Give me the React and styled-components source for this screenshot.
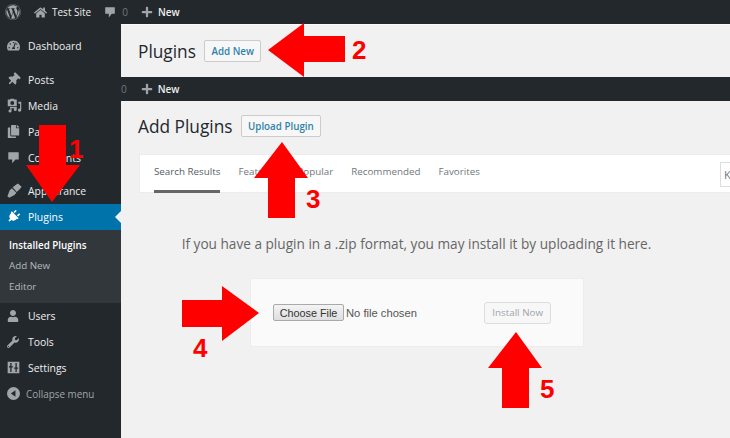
import styled, { createGlobalStyle } from 'styled-components'
import {
  FaWordpress, FaHome, FaPlus, FaThumbtack, FaPlug,
  FaUser, FaWrench, FaTachometerAlt, FaCopy,
} from 'react-icons/fa'

const Global = createGlobalStyle`
  html, body { margin: 0; padding: 0; background: #f1f1f1; }
  * { box-sizing: border-box; }
`

const Page = styled.div`
  position: relative;
  width: 730px;
  height: 438px;
  overflow: hidden;
  background: #f1f1f1;
  font-family: "Open Sans", "Liberation Sans", sans-serif;
  display: flex;
  flex-direction: column;
`

const Bar = styled.div`
  flex: none;
  height: 24px;
  background: #23282d;
  color: #eee;
  font-size: 10px;
  display: flex;
  align-items: center;
  padding-left: ${p => p.$left || 0}px;
  svg { color: #a0a5aa; flex: none; }
`

const BarText = styled.span`
  margin-left: ${p => p.$left || 0}px;
  color: ${p => p.$muted ? '#72777c' : '#eee'};
  font-weight: ${p => p.$bold ? 600 : 400};
`

const BarIcon = styled.span`
  display: flex;
  margin-left: ${p => p.$left || 0}px;
`

const Body = styled.div`
  flex: 1;
  display: flex;
  min-height: 0;
`

const Sidebar = styled.nav`
  flex: none;
  width: 121px;
  background: #23282d;
  padding-top: 9px;
  display: flex;
  flex-direction: column;
`

const Group = styled.div`
  margin-bottom: ${p => p.$gap || 0}px;
`

const Row = styled.div`
  position: relative;
  height: 26px;
  display: flex;
  align-items: center;
  padding: 0 0 1px 7px;
  font-size: ${p => p.$muted ? 9.9 : 10.4}px;
  color: ${p => p.$active ? '#fff' : p.$muted ? '#a0a5aa' : '#eee'};
  background: ${p => p.$active ? '#0073aa' : 'transparent'};
  svg { color: ${p => p.$active ? '#fff' : '#a0a5aa'}; }
`

const Notch = styled.i`
  position: absolute;
  right: 0;
  top: 7px;
  border: 6px solid transparent;
  border-right-color: #f1f1f1;
  border-left-width: 0;
`

const IconSlot = styled.span`
  width: ${p => p.$w || 21}px;
  flex: none;
  display: flex;
  align-items: center;
`

const Tilted = styled.span`
  display: flex;
  transform: rotate(${p => p.$deg}deg);
`

const Submenu = styled.div`
  height: 73px;
  background: #32373c;
  padding-top: 5px;
`

const SubItem = styled.div`
  height: 20.5px;
  display: flex;
  align-items: center;
  padding-left: 9px;
  font-size: 9.8px;
  color: ${p => p.$current ? '#fff' : '#b4b9be'};
  font-weight: ${p => p.$current ? 600 : 400};
`

const Main = styled.main`
  flex: 1;
  min-width: 0;
  display: flex;
  flex-direction: column;
`

const Header = styled.div`
  flex: none;
  height: ${p => p.$h}px;
  display: flex;
  align-items: center;
  gap: 8px;
  padding: 0 0 0 17px;
  border-top: ${p => p.$line ? '1px solid #fafafa' : 'none'};
`

const Title = styled.h1`
  margin: 0;
  font-size: 17.3px;
  font-weight: 400;
  color: #23282d;
`

const SmallButton = styled.a`
  height: 22px;
  display: flex;
  align-items: center;
  padding: 0 6.5px;
  background: #f7f7f7;
  border: 1px solid #ccc;
  border-radius: 2px;
  font-size: 9.8px;
  font-weight: 600;
  color: #2f83ab;
`

const Tabs = styled.div`
  flex: none;
  margin: 3px -20px 0 18px;
  height: 39px;
  background: #fff;
  border: 1px solid #ececec;
  border-right: none;
  display: flex;
  padding-left: 14px;
  gap: 18px;
  position: relative;
`

const Tab = styled.div`
  height: 38px;
  display: flex;
  align-items: center;
  padding-bottom: 2px;
  font-size: 9.8px;
  color: ${p => p.$active ? '#555d66' : '#72777c'};
  border-bottom: 3px solid ${p => p.$active ? '#666' : 'transparent'};
`

const Search = styled.div`
  position: absolute;
  left: 580px;
  top: 7px;
  width: 60px;
  height: 25px;
  padding: 4px 0 0 3px;
  background: #fff;
  border: 1px solid #ddd;
  font-size: 11px;
  color: #72777c;
`

const Hint = styled.p`
  margin: 41px 0 0;
  width: 591px;
  text-align: center;
  font-size: 13.63px;
  line-height: 20px;
  color: #666;
`

const UploadCard = styled.div`
  flex: none;
  width: 334px;
  height: 69px;
  margin: 24px 0 0 129px;
  padding: 0 32px 0 22px;
  background: #fafafa;
  border: 1px solid #ededed;
  display: flex;
  align-items: center;
  justify-content: space-between;
`

const FileInput = styled.input`
  width: 200px;
  font-family: "Liberation Sans", Arial, sans-serif;
  font-size: 11.2px;
  color: #555;

  &::file-selector-button {
    height: 17px;
    width: 71px;
    padding: 0;
    margin-right: 2px;
    font: inherit;
    font-size: 10.8px;
    color: #333;
    background: linear-gradient(#f4f4f4, #dedede);
    border: 1px solid #a9a9a9;
    border-radius: 2px;
  }
`

const InstallButton = styled.span`
  height: 22px;
  display: flex;
  align-items: center;
  padding: 0 7px;
  background: #f7f7f7;
  border: 1px solid #ddd;
  border-radius: 3px;
  font-size: 9.8px;
  color: #a0a5aa;
`

const Overlay = styled.svg`
  position: absolute;
  left: 0;
  top: 0;
  pointer-events: none;
`

const Step = styled.span`
  position: absolute;
  left: ${p => p.$x}px;
  top: ${p => p.$y}px;
  font-family: "Liberation Sans", Arial, sans-serif;
  font-size: 26px;
  line-height: 26px;
  font-weight: 700;
  color: #f00;
`

const arrows = [
  '39,125 66,125 66,165 80,165 52,202 26,165 39,165',
  '268,50 304,23 304,36 345,36 345,62 304,62 304,77',
  '282,142 308,178 295,178 295,218 268,218 268,178 254,178',
  '259,313 222,286 222,300 182,300 182,327 222,327 222,341',
  '516,332 542,368 529,368 529,408 502,408 502,368 488,368',
]

const steps = [
  { n: 1, x: 69, y: 136 },
  { n: 2, x: 352, y: 37 },
  { n: 3, x: 306, y: 186 },
  { n: 4, x: 193, y: 335 },
  { n: 5, x: 540, y: 376 },
]

const Bubble = ({ size = 12 }) => (
  <svg width={size} height={size} viewBox="0 0 20 20" fill="currentColor">
    <path d="M2 2h16v11h-5l-5 6v-6H2z" />
  </svg>
)

const MediaIcon = () => (
  <svg width="15" height="15" viewBox="0 0 20 20" fill="currentColor">
    <path d="M1 2h3l1-1h4l1 1h3v9H1zM7 4a2.6 2.6 0 1 0 0 5.200a2.600 2.600 0 0 0 0-5.200z" fillRule="evenodd" />
    <path d="M15 5h4v11a2.200 2.200 0 1 1-1.600-2V7.500h-2zM4 12h9v3.500a2 2 0 1 1-1.500-2V13.500H6v4a2 2 0 1 1-1.500-2z" />
  </svg>
)

const BrushIcon = () => (
  <svg width="15" height="15" viewBox="0 0 20 20" fill="currentColor">
    <path d="M12.500 2l2-1.500 5 4.500-2 2.500-1 1-3.500 3.500L7.500 5.500z" />
    <path d="M6.500 7l6 6-2.500 3-7 3.500-2.500-2L3.500 10z" />
  </svg>
)

const SettingsIcon = () => (
  <svg width="13" height="13" viewBox="0 0 20 20" fill="currentColor">
    <path fillRule="evenodd" d="M1 1h18v18H1zM5 3v5H3v2h2v7h2v-7h2V8H7V3zM13 3v7h-2v2h2v5h2v-5h2v-2h-2V3z" />
  </svg>
)

const CollapseIcon = () => (
  <svg width="13" height="13" viewBox="0 0 20 20" fill="currentColor">
    <path fillRule="evenodd" d="M10 0a10 10 0 1 0 0 20a10 10 0 0 0 0-20zM13 5v10l-7-5z" />
  </svg>
)

const topItems = [{ label: 'Dashboard', icon: <FaTachometerAlt size={13} /> }]

const contentItems = [
  { label: 'Posts', icon: <Tilted $deg={45}><FaThumbtack size={13} /></Tilted> },
  { label: 'Media', icon: <MediaIcon /> },
  { label: 'Pages', icon: <FaCopy size={13} /> },
  { label: 'Comments', icon: <Bubble size={13} /> },
]

const bottomItems = [
  { label: 'Users', icon: <FaUser size={12} /> },
  { label: 'Tools', icon: <FaWrench size={12} /> },
  { label: 'Settings', icon: <SettingsIcon /> },
]

const tabs = ['Search Results', 'Featured', 'Popular', 'Recommended', 'Favorites']

function MenuRow({ item }) {
  return (
    <Row>
      <IconSlot>{item.icon}</IconSlot>
      {item.label}
    </Row>
  )
}

export default function App() {
  return (
    <Page>
      <Global />
      <Bar $left={5}>
        <FaWordpress size={16} />
        <BarIcon $left={13}><FaHome size={13} /></BarIcon>
        <BarText $left={5}>Test Site</BarText>
        <BarIcon $left={13}><Bubble /></BarIcon>
        <BarText $left={6} $muted>0</BarText>
        <BarIcon $left={13}><FaPlus size={12} /></BarIcon>
        <BarText $left={5} $bold>New</BarText>
      </Bar>
      <Body>
        <Sidebar>
          <Group $gap={8}>
            {topItems.map(i => <MenuRow key={i.label} item={i} />)}
          </Group>
          <Group $gap={7}>
            {contentItems.map(i => <MenuRow key={i.label} item={i} />)}
          </Group>
          <Group>
            <Row>
              <IconSlot><BrushIcon /></IconSlot>
              Appearance
            </Row>
            <Row $active>
              <IconSlot><Tilted $deg={45}><FaPlug size={13} /></Tilted></IconSlot>
              Plugins
              <Notch />
            </Row>
            <Submenu>
              <SubItem $current>Installed Plugins</SubItem>
              <SubItem>Add New</SubItem>
              <SubItem>Editor</SubItem>
            </Submenu>
            {bottomItems.map(i => <MenuRow key={i.label} item={i} />)}
            <Row $muted>
              <IconSlot $w={19}><CollapseIcon /></IconSlot>
              Collapse menu
            </Row>
          </Group>
        </Sidebar>
        <Main>
          <Header $h={53} $line>
            <Title>Plugins</Title>
            <SmallButton>Add New</SmallButton>
          </Header>
          <Bar>
            <BarText $muted>0</BarText>
            <BarIcon $left={14}><FaPlus size={12} /></BarIcon>
            <BarText $left={5} $bold>New</BarText>
          </Bar>
          <Header $h={50}>
            <Title>Add Plugins</Title>
            <SmallButton>Upload Plugin</SmallButton>
          </Header>
          <Tabs>
            {tabs.map((t, i) => <Tab key={t} $active={i === 0}>{t}</Tab>)}
            <Search>K</Search>
          </Tabs>
          <Hint>If you have a plugin in a .zip format, you may install it by uploading it here.</Hint>
          <UploadCard>
            <FileInput type="file" />
            <InstallButton>Install Now</InstallButton>
          </UploadCard>
        </Main>
      </Body>
      <Overlay width="730" height="438" viewBox="0 0 730 438">
        {arrows.map(points => <polygon key={points} points={points} fill="#f00" />)}
      </Overlay>
      {steps.map(s => <Step key={s.n} $x={s.x} $y={s.y}>{s.n}</Step>)}
    </Page>
  )
}
